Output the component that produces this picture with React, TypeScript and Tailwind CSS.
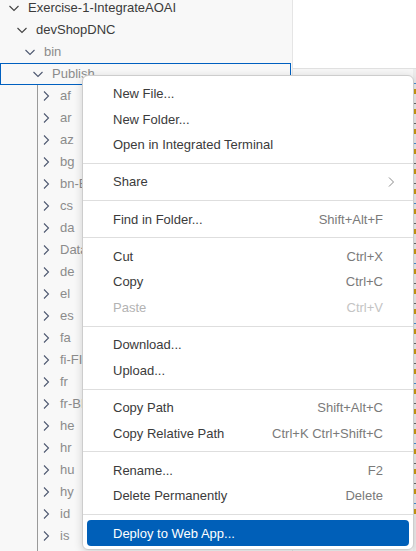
import React from "react";

type Row = { label: string; level: number; open?: boolean; dim?: boolean; focused?: boolean };

const tree: Row[] = [
  { label: "Exercise-1-IntegrateAOAI", level: 0, open: true },
  { label: "devShopDNC", level: 1, open: true },
  { label: "bin", level: 2, open: true, dim: true },
  { label: "Publish", level: 3, open: true, dim: true, focused: true },
  ...["af", "ar", "az", "bg", "bn-BD", "cs", "da", "Data", "de", "el", "es", "fa", "fi-FI", "fr", "fr-BE", "he", "hr", "hu", "hy", "id", "is"].map(
    (label) => ({ label, level: 4, dim: true })
  ),
];

type MenuEntry = { label: string; keys?: string; disabled?: boolean; sub?: boolean; active?: boolean } | "sep";

const menu: MenuEntry[] = [
  { label: "New File..." },
  { label: "New Folder..." },
  { label: "Open in Integrated Terminal" },
  "sep",
  { label: "Share", sub: true },
  "sep",
  { label: "Find in Folder...", keys: "Shift+Alt+F" },
  "sep",
  { label: "Cut", keys: "Ctrl+X" },
  { label: "Copy", keys: "Ctrl+C" },
  { label: "Paste", keys: "Ctrl+V", disabled: true },
  "sep",
  { label: "Download..." },
  { label: "Upload..." },
  "sep",
  { label: "Copy Path", keys: "Shift+Alt+C" },
  { label: "Copy Relative Path", keys: "Ctrl+K Ctrl+Shift+C" },
  "sep",
  { label: "Rename...", keys: "F2" },
  { label: "Delete Permanently", keys: "Delete" },
  "sep",
  { label: "Deploy to Web App...", active: true },
];

const Chevron = ({ open, color }: { open?: boolean; color: string }) => (
  <svg width="16" height="16" viewBox="0 0 16 16" className="shrink-0">
    {open ? (
      <path d="M3.5 6 L8 10.5 L12.5 6" fill="none" stroke={color} strokeWidth="1.1" />
    ) : (
      <path d="M6 3.5 L10.5 8 L6 12.5" fill="none" stroke={color} strokeWidth="1.1" />
    )}
  </svg>
);

const TreeRow = ({ row }: { row: Row }) => (
  <div
    className={
      "relative flex items-center h-[22px] text-[13px] whitespace-nowrap " +
      (row.focused ? "outline outline-1 -outline-offset-1 outline-[#0060c0] mr-[1px]" : "")
    }
    style={{ paddingLeft: 6 + row.level * 8 }}
  >
    <Chevron open={row.open} color={row.level >= 2 ? "#4e5870" : "#424242"} />
    <span className={"ml-[6px] " + (row.dim ? "text-[#8b8b8b]" : "text-[#3b3b3b]")}>{row.label}</span>
  </div>
);

export default function App() {
  return (
    <div className="relative flex w-[416px] h-[551px] overflow-hidden bg-white font-['Liberation_Sans',Arial,sans-serif]">
      {/* explorer */}
      <div className="relative w-[293px] shrink-0 bg-[#f8f8f8] border-r border-[#e5e5e5]">
        <div className="-mt-[3px] flex flex-col">
          {tree.map((r) => (
            <TreeRow key={r.label} row={r} />
          ))}
        </div>
        <div className="absolute left-[37px] top-[85px] bottom-0 w-px bg-[#9a9a9a]" />
      </div>

      {/* editor side */}
      <div className="flex flex-col flex-1">
        <div className="h-[68px] bg-white" />
        <div className="flex flex-1 border-t border-[#e0e0e0] bg-[#f6f6f6]">
          <div className="flex-1" />
          <div className="w-[3px] flex flex-col pt-[14px] gap-[9px] bg-[#ececec]">
            {Array.from({ length: 22 }).map((_, i) => (
              <div key={i} className="flex flex-col gap-[5px]">
                <div className={"h-[1px] " + (i % 3 === 0 ? "bg-[#4a8fd0]" : "bg-[#6b6b6b]")} />
                <div className="h-[5px] bg-[#c99a12]" />
              </div>
            ))}
          </div>
        </div>
      </div>

      {/* context menu */}
      <div className="absolute left-[82px] top-[75px] w-[332px] h-[475px] bg-white border border-[#cdcdcd] rounded-[6px] shadow-[0_2px_8px_rgba(0,0,0,0.16)] py-[5px] text-[13px]">
        {menu.map((m, i) =>
          m === "sep" ? (
            <div key={i} className="h-[11.6px] flex items-center">
              <div className="h-px w-full bg-[#dedede]" />
            </div>
          ) : (
            <div
              key={i}
              className={
                "mx-[4px] h-[25.6px] flex items-center justify-between pl-[26px] pr-[26px] rounded-[4px] " +
                (m.active ? "bg-[#005fb8] text-white" : m.disabled ? "text-[#b3b3b3]" : "text-[#3b3b3b]")
              }
            >
              <span>{m.label}</span>
              {m.keys && (
                <span className={m.disabled ? "text-[#c4c4c4]" : "text-[#7a7a7a]"}>{m.keys}</span>
              )}
              {m.sub && (
                <svg width="12" height="12" viewBox="0 0 12 12" className="-mr-[14px]">
                  <path d="M4 1.5 L8.5 6 L4 10.5" fill="none" stroke="#8a8a8a" strokeWidth="1" />
                </svg>
              )}
            </div>
          )
        )}
      </div>
    </div>
  );
}
